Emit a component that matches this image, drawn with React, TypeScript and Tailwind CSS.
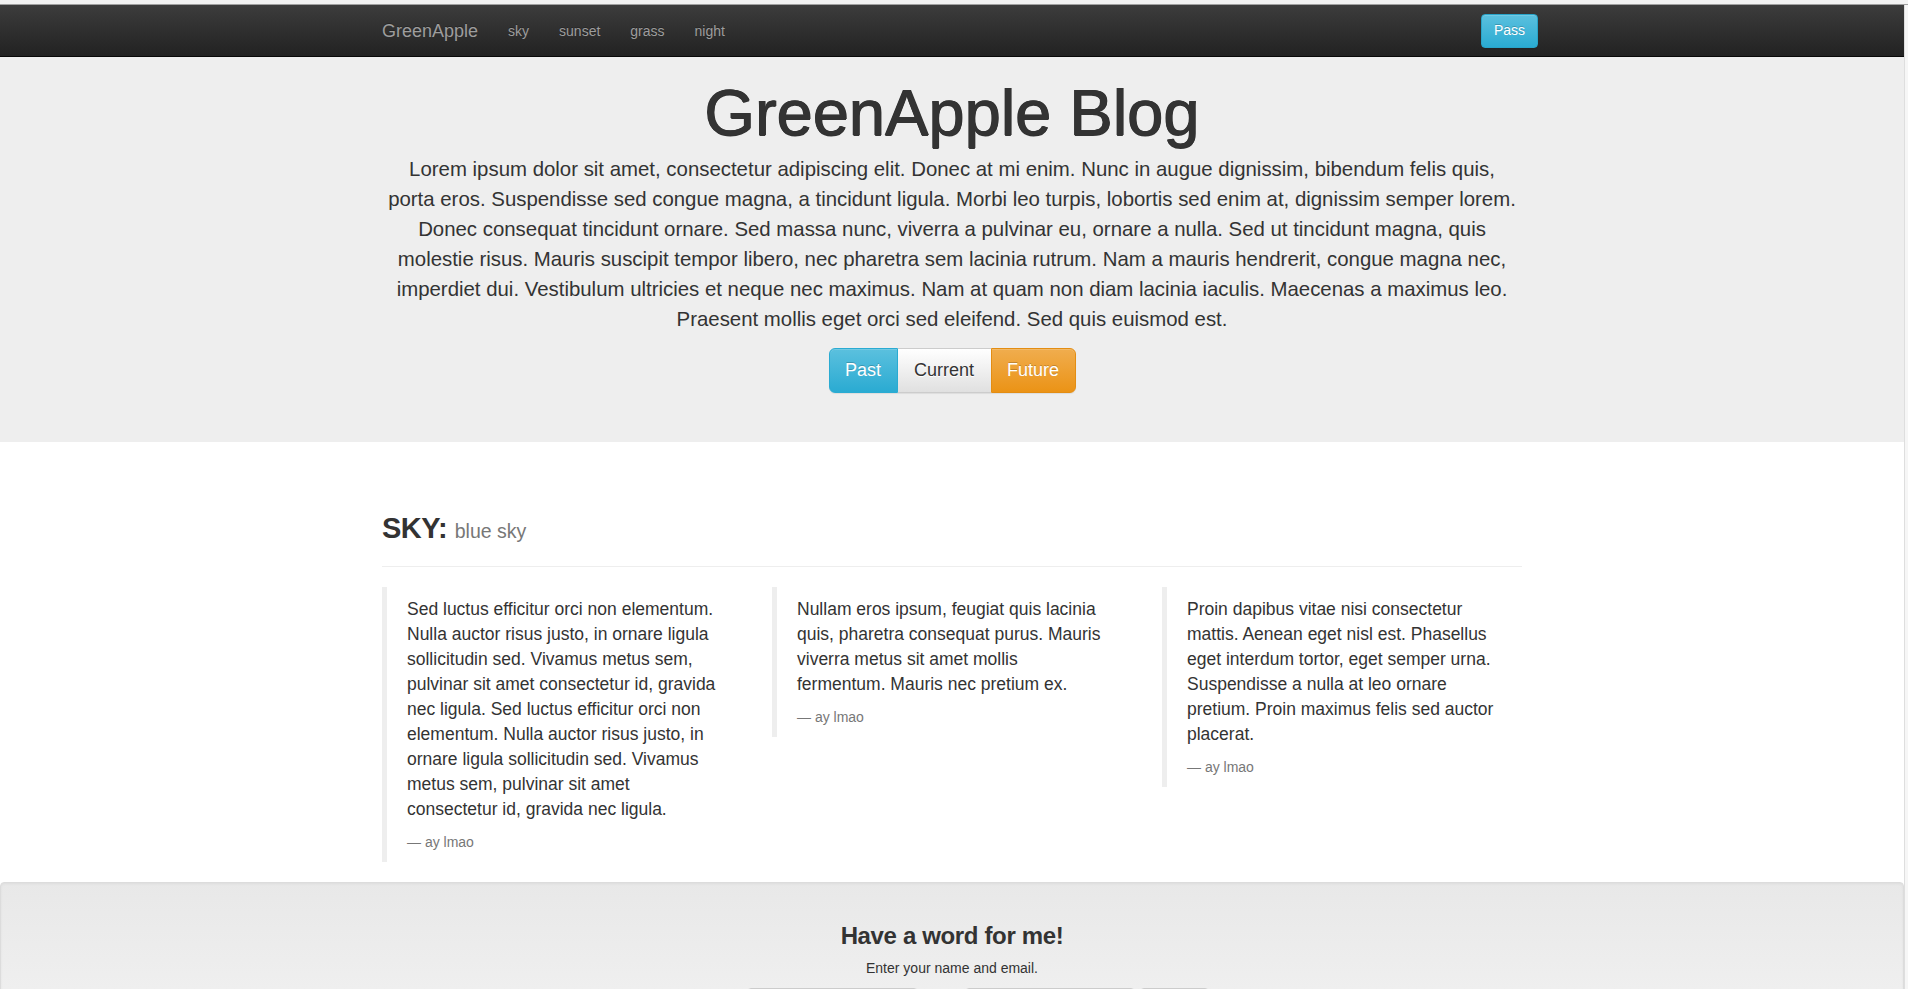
import React from "react";

const lorem = [
  "Lorem ipsum dolor sit amet, consectetur adipiscing elit. Donec at mi enim. Nunc in augue dignissim, bibendum felis quis,",
  "porta eros. Suspendisse sed congue magna, a tincidunt ligula. Morbi leo turpis, lobortis sed enim at, dignissim semper lorem.",
  "Donec consequat tincidunt ornare. Sed massa nunc, viverra a pulvinar eu, ornare a nulla. Sed ut tincidunt magna, quis",
  "molestie risus. Mauris suscipit tempor libero, nec pharetra sem lacinia rutrum. Nam a mauris hendrerit, congue magna nec,",
  "imperdiet dui. Vestibulum ultricies et neque nec maximus. Nam at quam non diam lacinia iaculis. Maecenas a maximus leo.",
  "Praesent mollis eget orci sed eleifend. Sed quis euismod est.",
];

const quotes: string[][] = [
  [
    "Sed luctus efficitur orci non elementum.",
    "Nulla auctor risus justo, in ornare ligula",
    "sollicitudin sed. Vivamus metus sem,",
    "pulvinar sit amet consectetur id, gravida",
    "nec ligula. Sed luctus efficitur orci non",
    "elementum. Nulla auctor risus justo, in",
    "ornare ligula sollicitudin sed. Vivamus",
    "metus sem, pulvinar sit amet",
    "consectetur id, gravida nec ligula.",
  ],
  [
    "Nullam eros ipsum, feugiat quis lacinia",
    "quis, pharetra consequat purus. Mauris",
    "viverra metus sit amet mollis",
    "fermentum. Mauris nec pretium ex.",
  ],
  [
    "Proin dapibus vitae nisi consectetur",
    "mattis. Aenean eget nisl est. Phasellus",
    "eget interdum tortor, eget semper urna.",
    "Suspendisse a nulla at leo ornare",
    "pretium. Proin maximus felis sed auctor",
    "placerat.",
  ],
];

export default function App() {
  return (
    <div className="w-[1908px] min-h-[989px] bg-white text-[#333] font-['Liberation_Sans',Arial,sans-serif]">
      <div className="h-[5px] bg-[#f2f2f2] border-b border-[#a0a0a0]" />
      <div className="flex">
        <div className="w-[1904px]">
          {/* Navbar */}
          <nav className="h-[52px] border-b border-[#080808] bg-[linear-gradient(to_bottom,#3c3c3c,#222222)]">
            <div className="w-[1170px] mx-auto px-[15px] h-full flex items-center">
              <span className="text-[18px] leading-[20px] text-[#9d9d9d] [text-shadow:0_-1px_0_rgba(0,0,0,0.25)]">
                GreenApple
              </span>
              <div className="flex gap-[30px] ml-[30px] text-[14px] leading-[20px] text-[#9d9d9d] [text-shadow:0_-1px_0_rgba(0,0,0,0.25)]">
                <span>sky</span>
                <span>sunset</span>
                <span>grass</span>
                <span>night</span>
              </div>
              <button className="ml-auto -mr-[16px] w-[57px] h-[34px] rounded-[4px] border border-[#28a4c9] bg-[linear-gradient(to_bottom,#5bc0de,#2aabd2)] text-white text-[14px] [text-shadow:0_-1px_0_rgba(0,0,0,0.2)] shadow-[inset_0_1px_0_rgba(255,255,255,0.15),0_1px_1px_rgba(0,0,0,0.075)]">
                Pass
              </button>
            </div>
          </nav>

          {/* Jumbotron */}
          <div className="h-[385px] bg-[#eeeeee] pt-[20px] text-center">
            <div className="w-[1170px] mx-auto px-[15px]">
              <h1 className="text-[65px] leading-[71px] text-[#333] [text-shadow:0.6px_0_0_#333,-0.6px_0_0_#333,0_0.5px_0_#333]">
                GreenApple Blog
              </h1>
              <p className="mt-[6px] text-[20.4px] leading-[30px] text-[#333] whitespace-nowrap">
                {lorem.map((l, i) => (
                  <React.Fragment key={i}>
                    {l}
                    {i < lorem.length - 1 && <br />}
                  </React.Fragment>
                ))}
              </p>
              <div className="mt-[14px] flex justify-center">
                <div className="flex h-[45px] rounded-[6px] shadow-[0_1px_1px_rgba(0,0,0,0.075)] text-[18px]">
                  <button className="w-[69px] h-full rounded-l-[6px] border border-[#2aabd2] bg-[linear-gradient(to_bottom,#5bc0de,#2aabd2)] text-white [text-shadow:0_-1px_0_rgba(0,0,0,0.2)] shadow-[inset_0_1px_0_rgba(255,255,255,0.15)]">
                    Past
                  </button>
                  <button className="w-[93px] h-full border-y border-[#cccccc] bg-[linear-gradient(to_bottom,#ffffff,#e0e0e0)] text-[#333] [text-shadow:0_1px_0_#fff]">
                    Current
                  </button>
                  <button className="w-[85px] h-full rounded-r-[6px] border border-[#e38d13] bg-[linear-gradient(to_bottom,#f0ad4e,#eb9316)] text-white [text-shadow:0_-1px_0_rgba(0,0,0,0.2)] shadow-[inset_0_1px_0_rgba(255,255,255,0.15)]">
                    Future
                  </button>
                </div>
              </div>
            </div>
          </div>

          {/* Sky section */}
          <div className="w-[1170px] mx-auto px-[15px] pt-[70px]">
            <div className="pb-[17px] border-b border-[#eeeeee]">
              <h2 className="leading-[33px]">
                <span className="text-[29px] font-bold tracking-[-0.5px] text-[#333]">SKY: </span>
                <span className="text-[19.5px] text-[#777]">blue sky</span>
              </h2>
            </div>
            <div className="mt-[20px] -mx-[15px] grid grid-cols-3 items-start">
              {quotes.map((q, i) => (
                <div key={i} className="px-[15px]">
                  <blockquote className="border-l-[5px] border-[#eeeeee] py-[10px] px-[20px]">
                    <p className="text-[17.5px] leading-[25px] mb-[10px] whitespace-nowrap">
                      {q.map((l, j) => (
                        <React.Fragment key={j}>
                          {l}
                          {j < q.length - 1 && <br />}
                        </React.Fragment>
                      ))}
                    </p>
                    <footer className="text-[14px] leading-[20px] text-[#777]">— ay lmao</footer>
                  </blockquote>
                </div>
              ))}
            </div>
          </div>

          {/* Well */}
          <div className="mt-[20px] h-[200px] rounded-[4px] border border-[#dcdcdc] bg-[linear-gradient(to_bottom,#e8e8e8,#f5f5f5)] shadow-[inset_0_1px_3px_rgba(0,0,0,0.05)] pt-[40px] text-center">
            <h3 className="text-[24px] font-bold leading-[26px] tracking-[-0.35px] text-[#333]">
              Have a word for me!
            </h3>
            <p className="mt-[9px] text-[14px] leading-[20px] text-[#333]">Enter your name and email.</p>
            <div className="mt-[10px] flex justify-center pl-[52px]">
              <input
                className="w-[171px] h-[34px] rounded-[4px] border border-[#cccccc] bg-white shadow-[inset_0_1px_1px_rgba(0,0,0,0.075)]"
                aria-label="Name"
              />
              <input
                className="ml-[47px] w-[170px] h-[34px] rounded-[4px] border border-[#cccccc] bg-white shadow-[inset_0_1px_1px_rgba(0,0,0,0.075)]"
                aria-label="Email"
              />
              <button className="ml-[5px] w-[69px] h-[34px] rounded-[4px] border border-[#cccccc] bg-[linear-gradient(to_bottom,#ffffff,#e0e0e0)] text-[14px]">
                Submit
              </button>
            </div>
          </div>
        </div>
        <div className="w-[4px] border-l border-[#dedede] bg-[#f6f6f6]" />
      </div>
    </div>
  );
}
